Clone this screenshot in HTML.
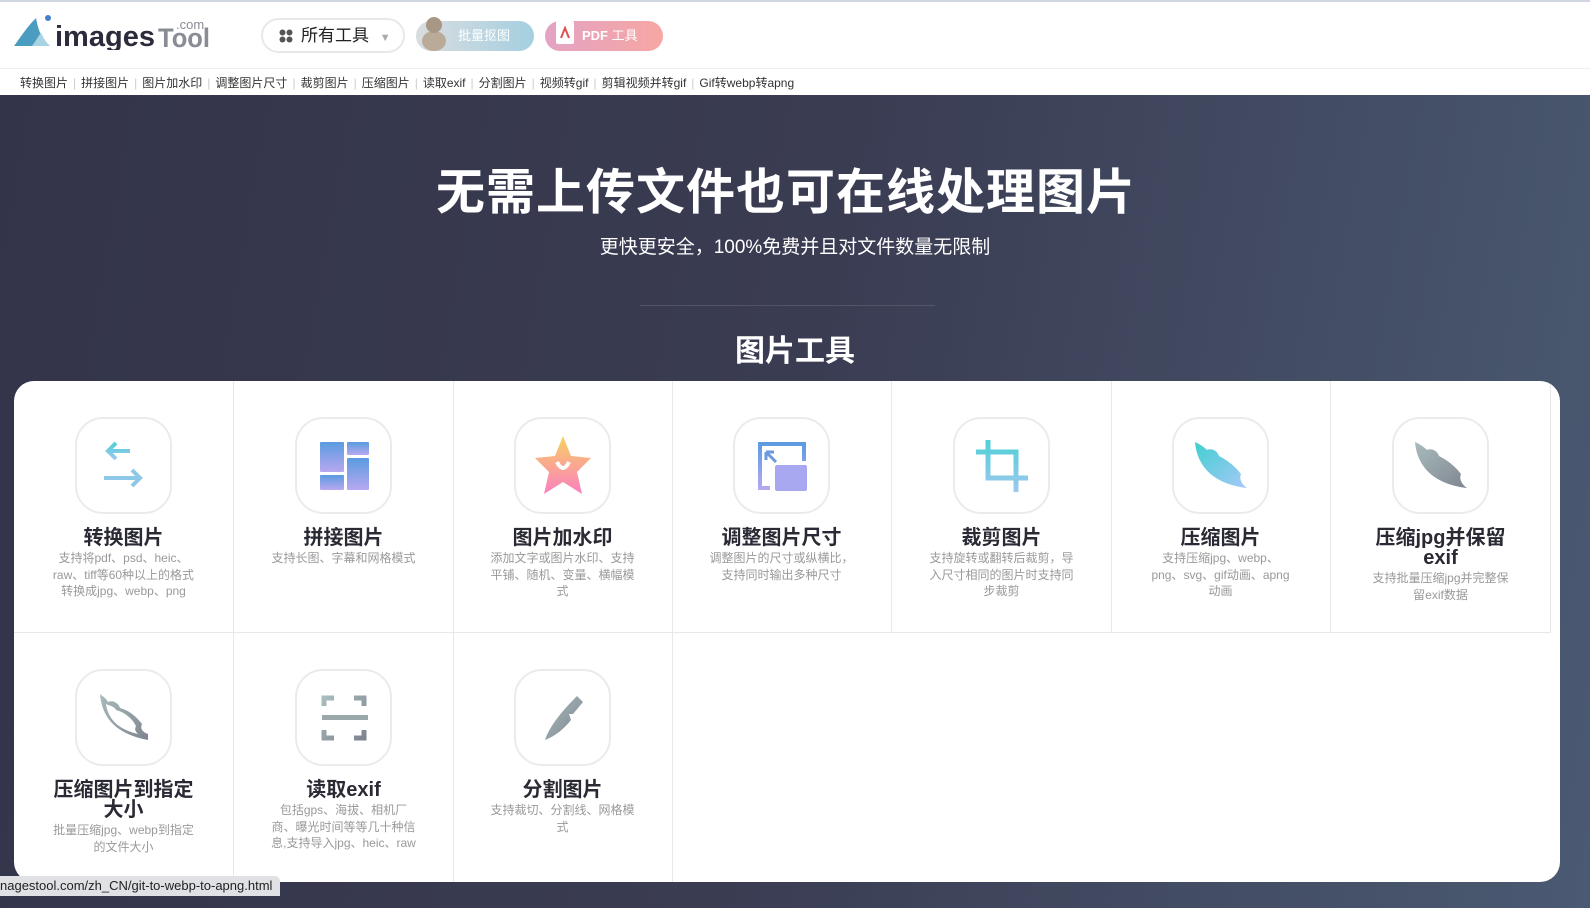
<!DOCTYPE html>
<html><head><meta charset="utf-8"><style>
*{margin:0;padding:0;box-sizing:border-box}
body{width:1590px;height:908px;overflow:hidden;font-family:"Liberation Sans","Noto Sans CJK SC",sans-serif;background:linear-gradient(100deg,#33344a 0%,#3a3c52 50%,#4a5a72 100%);position:relative}
.top{position:absolute;left:0;top:0;width:1590px;height:95px;background:#fff;border-top:2px solid #cfd6df}
.nav{position:absolute;top:66px;left:0;width:1590px;height:29px;border-top:1px solid #eee;font-size:12px;color:#333;padding-left:20px;line-height:28px;white-space:nowrap}
.nav span.s{color:#ccc;margin:0 5px}
.logo{position:absolute;left:14px;top:12px}
.btn1{position:absolute;left:261px;top:16px;width:144px;height:35px;border:2px solid #e8e8e8;border-radius:18px;font-size:17px;color:#222;line-height:31px;padding-left:38px}
.btn2{position:absolute;left:416px;top:19px;width:118px;height:30px;border-radius:15px;background:linear-gradient(90deg,#d9dde0,#a5cfe0);color:#fff;font-size:13px;line-height:30px;padding-left:42px}
.btn3{position:absolute;left:545px;top:19px;width:118px;height:30px;border-radius:15px;background:linear-gradient(90deg,#e3a3c3,#f7a7a3);color:#fff;font-size:13px;font-weight:bold;line-height:30px;padding-left:37px}
h1{position:absolute;top:153px;left:-9px;width:1590px;text-align:center;color:#fff;font-size:49px;font-weight:bold;letter-spacing:1px}
.sub{position:absolute;top:232px;left:0;width:1590px;text-align:center;color:#fff;font-size:19px}
.hr{position:absolute;top:305px;left:640px;width:295px;height:1px;background:rgba(255,255,255,.12)}
h2{position:absolute;top:326px;left:0;width:1590px;text-align:center;color:#fff;font-size:30px;font-weight:bold}
.card{position:absolute;left:14px;top:381px;width:1546px;height:501px;background:#fff;border-radius:20px;overflow:hidden}
.cell{position:absolute;width:220px;height:252px;border-right:1px solid #e8e8e8;border-bottom:1px solid #e8e8e8;text-align:center}
.ic{position:absolute;left:61px;top:36px;width:97px;height:97px;border:2px solid #ebebeb;border-radius:28px;display:flex;align-items:center;justify-content:center}
.t{position:absolute;top:147px;left:37px;right:37px;font-size:20px;font-weight:bold;color:#2a2a35;line-height:20px}
.d{font-size:12px;color:#999;line-height:16.5px;font-weight:normal;margin:2px 0 0}
.status{position:absolute;left:0;top:876px;width:280px;height:20px;background:#dfe1e5;border-top-right-radius:5px;font-size:13px;color:#222;line-height:20px;white-space:nowrap;overflow:hidden}
</style></head><body>
<div class="top">
<svg class="logo" width="200" height="36" viewBox="0 0 200 36"><path d="M0 32 C6 24 12 14 22 4 C24 14 26 22 34 32 Z" fill="#4a9cc0"/><path d="M18 32 C22 26 25 22 27 18 C29 24 32 28 36 32 Z" fill="#a8d3e3"/><circle cx="34" cy="4" r="3" fill="#4a7fd0"/><text x="41" y="32" font-family="Liberation Sans" font-weight="bold" font-size="29" fill="#2b2b3c" textLength="100" lengthAdjust="spacingAndGlyphs">images</text><text x="144" y="33" font-family="Liberation Sans" font-weight="bold" font-size="27" fill="#8a8c95" textLength="52" lengthAdjust="spacingAndGlyphs">Tool</text><text x="162" y="15" font-family="Liberation Sans" font-size="13" fill="#8a8c95">.com</text></svg>
<div class="btn1"><svg style="position:absolute;left:16px;top:9px" width="14" height="14"><circle cx="3.5" cy="3.5" r="3" fill="#555"/><circle cx="10.5" cy="3.5" r="3" fill="#555"/><circle cx="3.5" cy="10.5" r="3" fill="#555"/><circle cx="10.5" cy="10.5" r="3" fill="#555"/></svg>所有工具 <span style="color:#aaa;font-size:11px;margin-left:6px">▼</span></div>
<div class="btn2"><svg style="position:absolute;left:0;top:-6px" width="36" height="36"><ellipse cx="18" cy="26" rx="12" ry="10" fill="#b9ab98"/><circle cx="18" cy="10" r="8" fill="#a89785"/></svg>批量抠图</div>
<div class="btn3"><svg style="position:absolute;left:10px;top:-1px" width="20" height="25"><rect x="1" y="1" width="18" height="23" fill="#fff" rx="2"/><path d="M6 18 L10 8 L14 18" stroke="#e05050" stroke-width="2" fill="none"/></svg>PDF <span style="font-weight:normal">工具</span></div>
<div class="nav">转换图片<span class="s">|</span>拼接图片<span class="s">|</span>图片加水印<span class="s">|</span>调整图片尺寸<span class="s">|</span>裁剪图片<span class="s">|</span>压缩图片<span class="s">|</span>读取exif<span class="s">|</span>分割图片<span class="s">|</span>视频转gif<span class="s">|</span>剪辑视频并转gif<span class="s">|</span>Gif转webp转apng</div>
</div>
<h1>无需上传文件也可在线处理图片</h1>
<div class="sub">更快更安全，100%免费并且对文件数量无限制</div>
<div class="hr"></div>
<h2>图片工具</h2>
<div class="card">
<svg width="0" height="0" style="position:absolute"><defs>
<linearGradient id="g1" x1="0" y1="0" x2="0" y2="1"><stop offset="0" stop-color="#4fd0d6"/><stop offset="1" stop-color="#9ec8f0"/></linearGradient>
<linearGradient id="g2" x1="0" y1="0" x2="0" y2="1"><stop offset="0" stop-color="#5a9be0"/><stop offset="1" stop-color="#b8a8f0"/></linearGradient>
<linearGradient id="g3" x1="0" y1="0" x2="0" y2="1"><stop offset="0" stop-color="#f8d060"/><stop offset="1" stop-color="#fb80c0"/></linearGradient>
<linearGradient id="g4" x1="0" y1="0" x2="1" y2="1"><stop offset="0" stop-color="#40cfd0"/><stop offset="1" stop-color="#a8c8f8"/></linearGradient>
<linearGradient id="g5" x1="0" y1="0" x2="1" y2="1"><stop offset="0" stop-color="#a8bcbc"/><stop offset="1" stop-color="#7f8590"/></linearGradient>
</defs></svg>
<div class="cell" style="left:0;top:0"><div class="ic"><svg width="60" height="60" viewBox="0 0 60 60"><path d="M14 15 L36 15 M22 7 L14 15 L22 23" stroke="url(#g1)" stroke-width="4" fill="none"/><path d="M10 42 L46 42 M38 34 L46 42 L38 50" stroke="#8ec8e8" stroke-width="4" fill="none"/></svg></div><div class="t">转换图片<div class="d">支持将pdf、psd、heic、raw、tiff等60种以上的格式转换成jpg、webp、png</div></div></div>
<div class="cell" style="left:220px;top:0"><div class="ic"><svg width="60" height="60" viewBox="0 0 60 60"><g fill="url(#g2)"><rect x="6" y="6" width="24" height="30" rx="1"/><rect x="33" y="6" width="22" height="13" rx="1"/><rect x="33" y="22" width="22" height="32" rx="1"/><rect x="6" y="39" width="24" height="15" rx="1"/></g></svg></div><div class="t">拼接图片<div class="d">支持长图、字幕和网格模式</div></div></div>
<div class="cell" style="left:439px;top:0"><div class="ic"><svg width="64" height="64" viewBox="0 0 64 64"><path d="M32 2 L40 22 L60 24 L46 38 L51 60 L32 48 L13 60 L18 38 L4 24 L24 22 Z" fill="url(#g3)"/><path d="M26 28 Q32 40 38 28" stroke="#fff" stroke-width="4" fill="none"/></svg></div><div class="t">图片加水印<div class="d">添加文字或图片水印、支持平铺、随机、变量、横幅模式</div></div></div>
<div class="cell" style="left:658px;top:0"><div class="ic"><svg width="60" height="60" viewBox="0 0 60 60"><path d="M6 6 H54 V25 H50 V10 H10 V50 H18 V54 H6 Z" fill="url(#g2)"/><rect x="23" y="29" width="32" height="26" rx="2" fill="#a8a8f0"/><path d="M14 16 L24 26 M14 16 V24 M14 16 H22" stroke="#6a9ae0" stroke-width="3" fill="none"/></svg></div><div class="t">调整图片尺寸<div class="d">调整图片的尺寸或纵横比，支持同时输出多种尺寸</div></div></div>
<div class="cell" style="left:878px;top:0"><div class="ic"><svg width="60" height="60" viewBox="0 0 60 60"><path d="M16 4 V42 H56 M4 16 H44 V56" stroke="url(#g1)" stroke-width="5" fill="none"/></svg></div><div class="t">裁剪图片<div class="d">支持旋转或翻转后裁剪，导入尺寸相同的图片时支持同步裁剪</div></div></div>
<div class="cell" style="left:1097px;top:0"><div class="ic"><svg width="60" height="60" viewBox="0 0 60 60"><path d="M4 6 C6 30 22 48 56 52 C50 48 48 42 50 38 C44 30 36 24 28 20 C26 14 20 12 16 14 C12 10 8 8 4 6 Z" fill="url(#g4)"/></svg></div><div class="t">压缩图片<div class="d">支持压缩jpg、webp、png、svg、gif动画、apng动画</div></div></div>
<div class="cell" style="left:1317px;top:0"><div class="ic"><svg width="60" height="60" viewBox="0 0 60 60"><path d="M4 6 C6 30 22 48 56 52 C50 48 48 42 50 38 C44 30 36 24 28 20 C26 14 20 12 16 14 C12 10 8 8 4 6 Z" fill="url(#g5)"/></svg></div><div class="t">压缩jpg并保留exif<div class="d">支持批量压缩jpg并完整保留exif数据</div></div></div>
<div class="cell" style="left:0;top:252px;border-bottom:none"><div class="ic"><svg width="60" height="60" viewBox="0 0 60 60"><path d="M6 6 C8 30 22 46 54 52 L54 46 C48 44 46 40 48 36 C42 28 34 22 26 20 C24 14 18 12 14 14 C12 10 8 8 6 6 Z M12 16 C16 18 20 18 22 22 C30 24 38 30 42 38 C40 42 42 44 44 46 C26 42 14 32 12 16 Z" fill="url(#g5)" fill-rule="evenodd"/></svg></div><div class="t">压缩图片到指定大小<div class="d">批量压缩jpg、webp到指定的文件大小</div></div></div>
<div class="cell" style="left:220px;top:252px;border-bottom:none"><div class="ic"><svg width="60" height="60" viewBox="0 0 60 60"><g fill="none" stroke="url(#g5)" stroke-width="5"><path d="M10 18 V10 H20 M40 10 H50 V18 M10 42 V50 H20 M40 50 H50 V42"/></g><rect x="8" y="27" width="46" height="5" fill="#9aa8ac"/></svg></div><div class="t">读取exif<div class="d">包括gps、海拔、相机厂商、曝光时间等等几十种信息,支持导入jpg、heic、raw</div></div></div>
<div class="cell" style="left:439px;top:252px;border-bottom:none"><div class="ic"><svg width="60" height="60" viewBox="0 0 60 60"><path d="M44 8 L50 14 L40 26 L36 26 L38 32 C30 42 22 48 12 52 C16 40 26 26 44 8 Z" fill="url(#g5)"/></svg></div><div class="t">分割图片<div class="d">支持裁切、分割线、网格模式</div></div></div>
<div style="position:absolute;left:658px;top:252px;width:1px;height:249px;background:#e8e8e8"></div>
</div>
<div class="status">nagestool.com/zh_CN/git-to-webp-to-apng.html</div>
</body></html>
